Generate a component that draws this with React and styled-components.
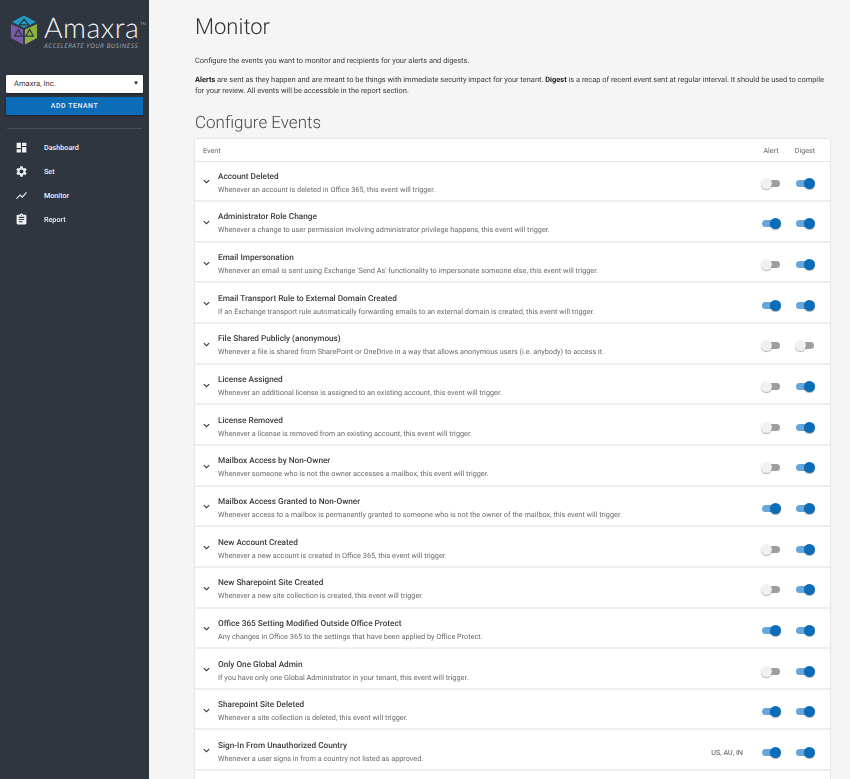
import React from "react";
import styled, { createGlobalStyle } from "styled-components";
import { MdDashboard, MdSettings, MdShowChart, MdAssignment, MdKeyboardArrowDown } from "react-icons/md";

const Global = createGlobalStyle`
  html, body { margin: 0; padding: 0; height: 779px; overflow: hidden; background: #f5f5f5; }
  body { font-family: Roboto, "Liberation Sans", sans-serif; text-rendering: geometricPrecision; -webkit-font-smoothing: antialiased; }
  * { box-sizing: border-box; }
`;

const Page = styled.div`display: flex; width: 850px; height: 779px; overflow: hidden; will-change: opacity; opacity: 0.999;`;
const Sidebar = styled.aside`width: 149px; flex: none; background: #2f3640; padding: 13px 6px 0; display: flex; flex-direction: column;`;
const Brand = styled.div`display: flex; align-items: flex-start; gap: 6px; height: 61px; padding-left: 4px;`;
const LogoMark = styled.svg`flex: none; margin-top: 1px;`;
const BrandText = styled.div`display: flex; flex-direction: column;`;
const BrandName = styled.div`font-family: Lato, sans-serif; font-weight: 300; font-size: 28.5px; line-height: 31px; color: #f2f3f4; letter-spacing: 0.5px; white-space: nowrap;
  sup { font-size: 3.5px; line-height: 4px; vertical-align: top; position: relative; top: 9px; left: 1px; }`;
const Tagline = styled.div`font-family: "Open Sans", sans-serif; font-style: italic; font-size: 6.4px; line-height: 8px; margin-top: -2px; color: #a9adb2; letter-spacing: 0.55px; white-space: nowrap;`;
const Select = styled.div`height: 17.5px; background: #fff; border-radius: 1px; margin-top: 1px; display: flex; align-items: center; justify-content: space-between; padding: 0 4px 0 8px; font-size: 7.6px; color: #333; box-shadow: 0 1px 2px rgba(0,0,0,.5);
  i { font-style: normal; font-size: 6px; color: #222; }`;
const AddButton = styled.div`height: 17.5px; margin-top: 4.5px; background: #0b6cb8; color: #e8f0f7; font-size: 7px; font-weight: 500; letter-spacing: .5px; display: flex; align-items: center; justify-content: center; box-shadow: 0 1px 2px rgba(0,0,0,.4);`;
const Divider = styled.div`height: 1px; background: #474e58; margin: 13.5px 1px 6px;`;
const NavItem = styled.div`height: 24px; display: flex; align-items: center; color: #f0f1f2; font-size: 7.2px; font-weight: 500; padding-left: 9px;
  svg { width: 13px; height: 13px; margin-right: 16px; flex: none; }`;

const Main = styled.main`flex: 1; min-width: 0; padding: 14px 20px 0 46px;`;
const Title = styled.h1`font-size: 22px; line-height: 28px; font-weight: 300; color: #333; margin: 0 0 13px 0;`;
const Para = styled.p`font-size: 7.45px; line-height: 11.5px; color: #3b3b3b; margin: 0 0 7px;
  b { font-weight: 700; color: #222; }`;
const Section = styled.h2`font-size: 17px; line-height: 24px; font-weight: 300; color: #4a4a4a; margin: 14px 0 4px;`;
const Card = styled.div`background: #fff; box-shadow: 0 0 2px rgba(0,0,0,.22); border-radius: 1px;`;
const HeadRow = styled.div`height: 23px; display: flex; align-items: center; padding: 1px 8px 0 8px; color: #666; font-size: 7.2px; border-bottom: 1px solid #e6e6e6;`;
const HeadLabel = styled.span`flex: 1;`;
const Col = styled.span`width: 34px; text-align: center; flex: none;`;
const Row = styled.div`height: 40.65px; display: flex; align-items: center; padding: 5px 8px 0 6px; border-bottom: 2px solid #efefef;`;
const Chevron = styled(MdKeyboardArrowDown)`width: 11px; height: 11px; color: #333; flex: none; margin: 0 2px 3px 0; transform: scale(1.1);`;
const RowText = styled.div`flex: 1; min-width: 0; padding-left: 4px;`;
const RowTitle = styled.div`font-size: 8.23px; line-height: 12px; font-weight: 500; color: #3a3a3a;`;
const RowDesc = styled.div`font-size: 7.3px; line-height: 12px; margin-top: 1px; color: #6a6a6a;`;
const Countries = styled.span`font-size: 7.2px; color: #555; margin: 0 11px 0 0;`;
const SwitchCell = styled.span`width: 34px; display: flex; justify-content: center; flex: none; margin-top: 0;`;
const Track = styled.span`position: relative; display: block; width: 18px; height: 7px; border-radius: 4px; background: ${p => (p.$on ? "#66a6db" : "#9e9e9e")};`;
const Thumb = styled.span`position: absolute; top: -2px; left: ${p => (p.$on ? "8px" : "-1px")}; width: 11px; height: 11px; border-radius: 50%; background: ${p => (p.$on ? "#0b6cb8" : "#f1f1f1")}; box-shadow: 0 1px 1px rgba(0,0,0,.3);`;

const Toggle = ({ on }) => (
  <SwitchCell><Track $on={on}><Thumb $on={on} /></Track></SwitchCell>
);

const Logo = () => (
  <LogoMark width="28" height="32" viewBox="0 0 30 33">
    <polygon points="15,1 28,8 15,14 2,8" fill="#1f9cc4" />
    <polygon points="1,10 14,16 14,32 1,25" fill="#7a5ba6" />
    <polygon points="29,10 16,16 16,32 29,25" fill="#8cb33f" />
    <path d="M15 5l-5 6h10zM5 23l4-7 4 7zM25 23l-4-7-4 7z" fill="none" stroke="#2f3640" strokeWidth="1.3" />
  </LogoMark>
);

const events = [
  ["Account Deleted", "Whenever an account is deleted in Office 365, this event will trigger.", 0, 1],
  ["Administrator Role Change", "Whenever a change to user permission involving administrator privilege happens, this event will trigger.", 1, 1],
  ["Email Impersonation", "Whenever an email is sent using Exchange 'Send As' functionality to impersonate someone else, this event will trigger.", 0, 1],
  ["Email Transport Rule to External Domain Created", "If an Exchange transport rule automatically forwarding emails to an external domain is created, this event will trigger.", 1, 1],
  ["File Shared Publicly (anonymous)", "Whenever a file is shared from SharePoint or OneDrive in a way that allows anonymous users (i.e. anybody) to access it.", 0, 0],
  ["License Assigned", "Whenever an additional license is assigned to an existing account, this event will trigger.", 0, 1],
  ["License Removed", "Whenever a license is removed from an existing account, this event will trigger.", 0, 1],
  ["Mailbox Access by Non-Owner", "Whenever someone who is not the owner accesses a mailbox, this event will trigger.", 0, 1],
  ["Mailbox Access Granted to Non-Owner", "Whenever access to a mailbox is permanently granted to someone who is not the owner of the mailbox, this event will trigger.", 1, 1],
  ["New Account Created", "Whenever a new account is created in Office 365, this event will trigger.", 0, 1],
  ["New Sharepoint Site Created", "Whenever a new site collection is created, this event will trigger.", 0, 1],
  ["Office 365 Setting Modified Outside Office Protect", "Any changes in Office 365 to the settings that have been applied by Office Protect.", 1, 1],
  ["Only One Global Admin", "If you have only one Global Administrator in your tenant, this event will trigger.", 0, 1],
  ["Sharepoint Site Deleted", "Whenever a site collection is deleted, this event will trigger.", 1, 1],
  ["Sign-In From Unauthorized Country", "Whenever a user signs in from a country not listed as approved.", 1, 1, "US, AU, IN"],
];

export default function App() {
  return (
    <Page>
      <Global />
      <Sidebar>
        <Brand>
          <Logo />
          <BrandText>
            <BrandName>Amaxra<sup>TM</sup></BrandName>
            <Tagline>ACCELERATE YOUR BUSINESS</Tagline>
          </BrandText>
        </Brand>
        <Select>Amaxra, Inc.<i>▼</i></Select>
        <AddButton>ADD TENANT</AddButton>
        <Divider />
        <NavItem><MdDashboard />Dashboard</NavItem>
        <NavItem><MdSettings />Set</NavItem>
        <NavItem><MdShowChart />Monitor</NavItem>
        <NavItem><MdAssignment />Report</NavItem>
      </Sidebar>
      <Main>
        <Title>Monitor</Title>
        <Para>Configure the events you want to monitor and recipients for your alerts and digests.</Para>
        <Para><b>Alerts</b> are sent as they happen and are meant to be things with immediate security impact for your tenant. <b>Digest</b> is a recap of recent event sent at regular interval. It should be used to compile for your review. All events will be accessible in the report section.</Para>
        <Section>Configure Events</Section>
        <Card>
          <HeadRow><HeadLabel>Event</HeadLabel><Col>Alert</Col><Col>Digest</Col></HeadRow>
          {events.map(([t, d, a, g, c]) => (
            <Row key={t}>
              <Chevron />
              <RowText><RowTitle>{t}</RowTitle><RowDesc>{d}</RowDesc></RowText>
              {c && <Countries>{c}</Countries>}
              <Toggle on={!!a} />
              <Toggle on={!!g} />
            </Row>
          ))}
          <Row />
        </Card>
      </Main>
    </Page>
  );
}
